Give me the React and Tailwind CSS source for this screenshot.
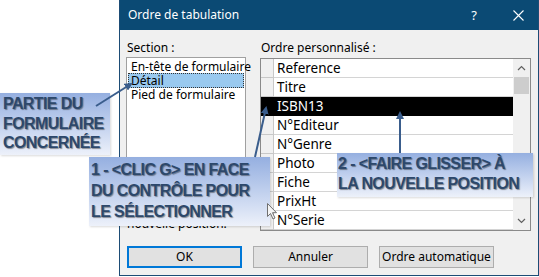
import React from "react";

const rows = ["Reference", "Titre", "ISBN13", "N°Editeur", "N°Genre", "Photo", "Fiche", "PrixHt", "N°Serie"];

function Callout({ className, lines }) {
  return (
    <div
      className={
        "absolute bg-gradient-to-b from-[#95afe0] to-[#edf1fa] font-bold text-[16px] tracking-[-0.6px] text-[#2d486b] [text-shadow:1px_1px_1px_rgba(0,0,0,0.4)] shadow-[1px_1px_2px_rgba(0,0,0,0.15)] " +
        className
      }
      style={{ fontFamily: '"Liberation Sans", Arial, sans-serif' }}
    >
      {lines.map((l, i) => (
        <div key={i} className="whitespace-nowrap">
          {l}
        </div>
      ))}
    </div>
  );
}

export default function App() {
  return (
    <div
      className="relative w-[539px] h-[277px] bg-white overflow-hidden"
      style={{ fontFamily: '"Noto Sans", "Open Sans", sans-serif' }}
    >
      {/* Dialog window */}
      <div className="absolute left-[119px] top-0 w-[420px] h-[276px] border-l border-r border-b border-[#1d4c75] bg-[#f0f0f0] flex flex-col">
        <div className="h-[30px] bg-[#0b4a74] text-white flex items-center pl-[8px] pr-[12px] shrink-0">
          <span className="text-[12px] leading-none">Ordre de tabulation</span>
          <span className="ml-auto text-[13px] leading-none mr-[36px]">?</span>
          <svg width="11" height="11" viewBox="0 0 11 11" className="mr-[2px]">
            <path d="M0.5 0.5 L10.5 10.5 M10.5 0.5 L0.5 10.5" stroke="white" strokeWidth="1.1" />
          </svg>
        </div>

        <div className="flex-1 pt-[10px] px-[6px] flex flex-col">
          <div className="flex gap-[14px]">
            {/* Left column */}
            <div className="w-[120px] h-[190px] flex flex-col">
              <div className="h-[18px] text-[12px] leading-[16px] pl-[1px] text-black">Section :</div>
              <div className="h-[104px] bg-white border border-[#a0a0a0] pt-[2px] px-[1px] text-[12px] leading-[13px] text-black">
                <div className="pl-[3px] whitespace-nowrap">En-tête de formulaire</div>
                <div className="pl-[2px] bg-[#99c9ef] border border-dotted border-[#333]">Détail</div>
                <div className="pl-[3px] whitespace-nowrap">Pied de formulaire</div>
              </div>
              <div className="mt-[7px] text-[12px] leading-[13px] text-black whitespace-nowrap pl-[1px]">
                <div>Cliquez sur un sélecteur pour</div>
                <div>sélectionner une ligne, ou</div>
                <div>faites glisser les lignes</div>
                <div>sélectionnées vers une</div>
                <div>nouvelle position.</div>
              </div>
            </div>

            {/* Right column */}
            <div className="w-[271px] flex flex-col">
              <div className="h-[18px] text-[12px] leading-[16px] pl-[1px] text-black whitespace-nowrap">Ordre personnalisé :</div>
              <div className="h-[173px] bg-white border border-[#8a8a8a] flex">
                <div className="flex-1 flex flex-col">
                  {rows.map((r) => {
                    const sel = r === "ISBN13";
                    return (
                      <div key={r} className="h-[19px] flex">
                        <div
                          className={
                            "w-[13px] border-r border-b " +
                            (sel ? "bg-black border-black" : "bg-[#f0f0f0] border-[#c8c8c8]")
                          }
                        />
                        <div
                          className={
                            "flex-1 pl-[3px] text-[13.5px] leading-[18px] border-b " +
                            (sel ? "bg-black text-white border-black" : "text-black border-[#d4d4d4]")
                          }
                        >
                          {r}
                        </div>
                      </div>
                    );
                  })}
                </div>
                <div className="w-[17px] bg-[#f0f0f0] flex flex-col items-center">
                  <div className="h-[18px] flex items-center justify-center">
                    <svg width="9" height="6" viewBox="0 0 9 6">
                      <path d="M1 5 L4.5 1.5 L8 5" stroke="#606060" strokeWidth="1.2" fill="none" />
                    </svg>
                  </div>
                  <div className="w-[15px] h-[17px] bg-[#cdcdcd]" />
                  <div className="flex-1" />
                  <div className="h-[18px] flex items-center justify-center">
                    <svg width="9" height="6" viewBox="0 0 9 6">
                      <path d="M1 1 L4.5 4.5 L8 1" stroke="#606060" strokeWidth="1.2" fill="none" />
                    </svg>
                  </div>
                </div>
              </div>
            </div>
          </div>

          {/* Buttons */}
          <div className="mt-[15px] ml-[1px] flex gap-[11px] text-[12px] text-black">
            <div className="w-[115px] h-[22px] bg-[#e1e1e1] border-2 border-[#0078d7] flex items-center justify-center">OK</div>
            <div className="w-[115px] h-[22px] bg-[#e1e1e1] border border-[#adadad] flex items-center justify-center">Annuler</div>
            <div className="w-[115px] h-[22px] bg-[#e1e1e1] border border-[#adadad] flex items-center justify-center">Ordre automatique</div>
          </div>
        </div>
      </div>

      {/* Callouts */}
      <Callout className="left-0 top-[93px] w-[110px] h-[62px] pl-[3px] pt-[1px] leading-[19.5px]" lines={["PARTIE DU", "FORMULAIRE", "CONCERNÉE"]} />
      <Callout
        className="left-[89px] top-[157px] w-[181px] h-[69px] pl-[2px] pt-[2px] leading-[21px]"
        lines={["1 - <CLIC G> EN FACE", "DU CONTRÔLE POUR", "LE SÉLECTIONNER"]}
      />
      <Callout
        className="left-[337px] top-[153px] w-[196px] h-[44px] pl-[1px] pt-[1px] leading-[20px]"
        lines={["2 - <FAIRE GLISSER> À", "LA NOUVELLE POSITION"]}
      />

      {/* Arrows */}
      <svg className="absolute left-0 top-0 pointer-events-none" width="539" height="277" viewBox="0 0 539 277">
        <defs>
          <marker id="ah" markerWidth="8" markerHeight="8" refX="6" refY="4" orient="auto" markerUnits="userSpaceOnUse">
            <path d="M0 0 L8 4 L0 8 Z" fill="#3a5d8c" />
          </marker>
        </defs>
        <line x1="96" y1="106" x2="131" y2="84" stroke="#3a5d8c" strokeWidth="2" markerEnd="url(#ah)" />
        <line x1="255" y1="157" x2="266" y2="108" stroke="#3a5d8c" strokeWidth="2" markerEnd="url(#ah)" />
        <line x1="400" y1="153" x2="400" y2="113" stroke="#3a5d8c" strokeWidth="2" markerEnd="url(#ah)" />
      </svg>

      {/* Mouse cursor */}
      <svg className="absolute left-[267px] top-[203px] pointer-events-none" width="12" height="18" viewBox="0 0 12 18">
        <path d="M0.5 0.5 L0.5 13.5 L3.5 10.5 L6 16 L8 15 L5.5 9.7 L9.5 9.7 Z" fill="#f4f4f4" stroke="#707070" strokeWidth="1" />
      </svg>
    </div>
  );
}
